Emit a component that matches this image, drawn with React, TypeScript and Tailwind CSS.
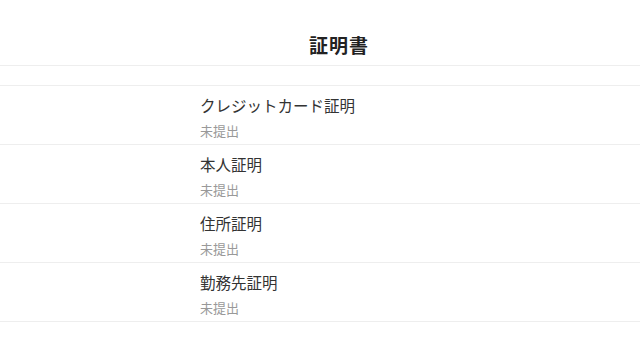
const items = ["クレジットカード証明", "本人証明", "住所証明", "勤務先証明"];

export default function App() {
  return (
    <div
      className="w-[640px] h-[360px] bg-white text-[#333]"
      style={{ fontFamily: '"Noto Sans CJK JP", "Noto Sans", sans-serif' }}
    >
      <header className="h-[66px] flex items-end justify-center pl-[38px] pb-[11px] border-b border-[#eeeeee]">
        <h1 className="text-[19px] tracking-[1px] font-bold text-[#222] leading-none">証明書</h1>
      </header>
      <div className="h-[20px] border-b border-[#eeeeee]" />
      <ul>
        {items.map((name) => (
          <li
            key={name}
            className="h-[59px] border-b border-[#eeeeee] pl-[200px] pt-[9px] flex flex-col"
          >
            <span className="text-[15.5px] leading-[20px] text-[#333]">{name}</span>
            <span className="text-[13px] leading-[17px] mt-[7px] text-[#999]">未提出</span>
          </li>
        ))}
      </ul>
    </div>
  );
}
